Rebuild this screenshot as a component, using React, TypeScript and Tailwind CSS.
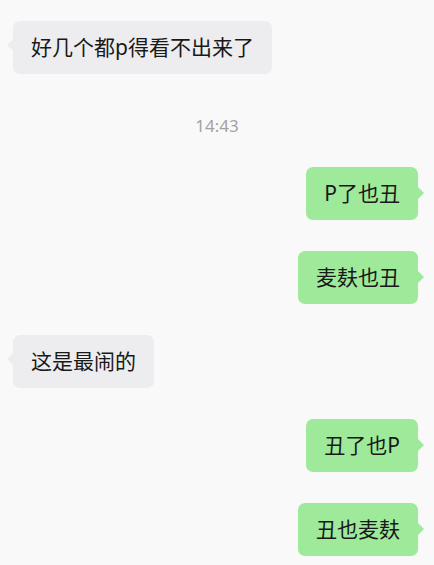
import React from "react";

type Msg =
  | { kind: "in"; text: string }
  | { kind: "out"; text: string }
  | { kind: "time"; text: string };

const messages: Msg[] = [
  { kind: "in", text: "好几个都p得看不出来了" },
  { kind: "time", text: "14:43" },
  { kind: "out", text: "P了也丑" },
  { kind: "out", text: "麦麸也丑" },
  { kind: "in", text: "这是最闹的" },
  { kind: "out", text: "丑了也P" },
  { kind: "out", text: "丑也麦麸" },
];

const font = {
  fontFamily: '"Noto Sans", "Noto Sans CJK SC", sans-serif',
};

function Bubble({ text, mine }: { text: string; mine: boolean }) {
  return (
    <div className={mine ? "flex justify-end pr-[16px]" : "flex justify-start pl-[13px]"}>
      <div
        className={
          "relative rounded-[7px] px-[18px] py-[12px] text-[21px] leading-[29px] text-[#191919] " +
          (mine ? "bg-[#9eea9a]" : "bg-[#ededef]")
        }
      >
        {mine ? (
          <span className="absolute right-[-6px] top-[20px] h-0 w-0 border-y-[6px] border-l-[6px] border-y-transparent border-l-[#9eea9a]" />
        ) : (
          <span className="absolute left-[-6px] top-[18px] h-0 w-0 border-y-[6px] border-r-[6px] border-y-transparent border-r-[#ededef]" />
        )}
        {text}
      </div>
    </div>
  );
}

export default function App() {
  return (
    <div className="min-h-[565px] w-full bg-[#f9f9f9] pt-[21px]" style={font}>
      <div className="flex flex-col gap-[31px]">
        {messages.map((m, i) =>
          m.kind === "time" ? (
            <div key={i} className="flex justify-center pt-[10px] text-[17px] leading-[21px] text-[#a3a3a3]">
              {m.text}
            </div>
          ) : (
            <Bubble key={i} text={m.text} mine={m.kind === "out"} />
          )
        )}
      </div>
    </div>
  );
}
